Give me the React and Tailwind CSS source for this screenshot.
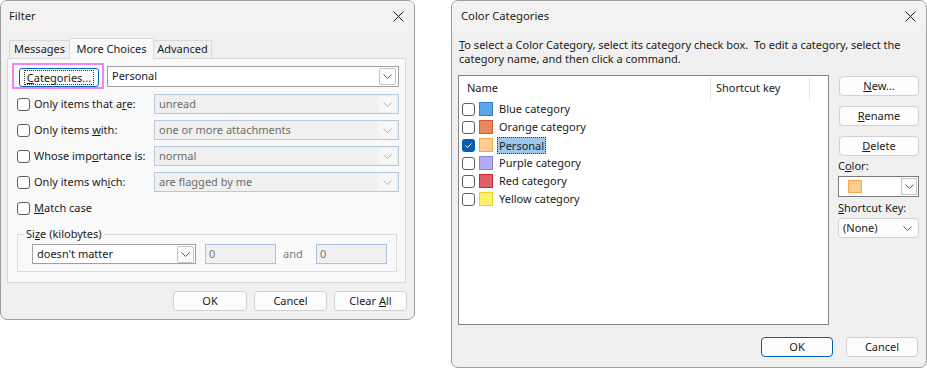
import React from "react";

const font = "font-['Segoe_UI','Noto_Sans',sans-serif]";

function CloseIcon() {
  return (
    <svg width="11" height="11" viewBox="0 0 11 11">
      <path d="M0.5 0.5L10.5 10.5M10.5 0.5L0.5 10.5" stroke="#1a1a1a" strokeWidth="1" fill="none" />
    </svg>
  );
}

function Chevron({ color = "#5a5a5a" }) {
  return (
    <svg width="9" height="5" viewBox="0 0 9 5">
      <path d="M0.5 0.5L4.5 4.5L8.5 0.5" stroke={color} strokeWidth="1" fill="none" />
    </svg>
  );
}

function Checkbox({ checked }) {
  if (checked) {
    return (
      <span className="w-[13px] h-[13px] rounded-[3px] bg-[#005fb8] flex items-center justify-center shrink-0">
        <svg width="9" height="7" viewBox="0 0 9 7">
          <path d="M1.5 3.5L3.5 5.5L7.5 1.5" stroke="white" strokeWidth="1" fill="none" />
        </svg>
      </span>
    );
  }
  return <span className="w-[13px] h-[13px] rounded-[3px] border border-[#5f5f5f] bg-white shrink-0" />;
}

function Btn({ children, className = "", primary }) {
  return (
    <div
      className={
        "h-[20px] flex items-center justify-center rounded-[4px] border bg-[#fdfdfd] " +
        (primary ? "border-[#005fb8] " : "border-[#d0d0d0] ") +
        className
      }
    >
      <span>{children}</span>
    </div>
  );
}

function DisabledCombo({ text }) {
  return (
    <div className="w-[245px] h-[20px] border border-[#b9c9dc] bg-[#f0f0f0] flex items-center justify-between pl-[4px] pr-[2px] text-[#6d6d6d]">
      <span>{text}</span>
      <span className="w-[17px] h-[16px] bg-[#f7f7f7] flex items-center justify-center">
        <Chevron color="#b5b5b5" />
      </span>
    </div>
  );
}

function DropBtn() {
  return (
    <span className="w-[17px] h-[17px] rounded-[2px] border border-[#c4c4c4] bg-[#fdfdfd] flex items-center justify-center">
      <Chevron />
    </span>
  );
}

function FilterDialog() {
  const rows = [
    [<>Only items that a<u>r</u>e:</>, "unread"],
    [<>Only items <u>w</u>ith:</>, "one or more attachments"],
    [<>Whose imp<u>o</u>rtance is:</>, "normal"],
    [<>Only items wh<u>i</u>ch:</>, "are flagged by me"],
  ];
  return (
    <div className="w-[415px] flex flex-col rounded-[7px] border border-[#9c9c9c] bg-[#f0f0f0] overflow-hidden">
      <div className="h-[30px] flex items-center justify-between pl-[8px] pr-[10px] bg-[#f3f2f0]">
        <span className="text-[11.25px]">Filter</span>
        <CloseIcon />
      </div>
      <div className="pt-[7px] pl-[6px]">
        <div className="h-[20px] flex items-end pl-[2px]">
          <div className="w-[61px] h-[18px] border border-b-0 border-[#d9d9d9] bg-[#f0f0f0] flex items-center justify-center">
            Messages
          </div>
          <div className="relative z-10 -ml-px w-[85px] h-[21px] -mb-px border border-b-0 border-[#d9d9d9] bg-[#f9f9f9] flex items-start pt-[2px] justify-center">
            More Choices
          </div>
          <div className="-ml-px w-[59px] h-[18px] border border-b-0 border-[#d9d9d9] bg-[#f0f0f0] flex items-center justify-center">
            Advanced
          </div>
        </div>
        <div className="w-[399px] h-[225px] border border-[#d9d9d9] bg-[#f9f9f9] pl-[4px] pt-[4px]">
          <div className="flex items-center h-[26px]">
            <div className="w-[92px] h-[26px] border-2 border-[#f383f1] pl-[5px] pt-[3px]">
              <div className="w-[80px] h-[19px] rounded-[3px] border border-[#0067c0] bg-[#fdfdfd] flex items-center justify-center">
                <span className="border border-dotted border-[#333] px-[2px] leading-[13px]">
                  <u>C</u>ategories...
                </span>
              </div>
            </div>
            <div className="ml-[3px] w-[292px] h-[21px] border border-[#a0a0a0] bg-white flex items-center justify-between pl-[4px] pr-[2px]">
              <span>Personal</span>
              <DropBtn />
            </div>
          </div>
          <div className="mt-[2px] pl-[5px]">
            {rows.map(([label, value], i) => (
              <div key={i} className="h-[26px] flex items-center">
                <div className="w-[137px] flex items-center gap-[4px]">
                  <Checkbox />
                  <span>{label}</span>
                </div>
                <DisabledCombo text={value} />
              </div>
            ))}
            <div className="h-[26px] flex items-center gap-[4px]">
              <Checkbox />
              <span>
                <u>M</u>atch case
              </span>
            </div>
          </div>
          <fieldset className="mt-[5px] ml-[5px] w-[380px] border border-[#dcdcdc] pl-[6px] pt-[2px] pb-[7px]">
            <legend className="px-[2px] leading-[16px]">
              Si<u>z</u>e (kilobytes)
            </legend>
            <div className="ml-[8px] flex items-center">
              <div className="w-[164px] h-[20px] border border-[#a0a0a0] bg-white flex items-center justify-between pl-[4px] pr-[1px]">
                <span>doesn't matter</span>
                <DropBtn />
              </div>
              <div className="ml-[9px] w-[71px] h-[20px] border border-[#a9c1de] bg-[#f0f0f0] pl-[3px] flex items-center text-[#7a7a7a]">
                0
              </div>
              <span className="ml-[7px] w-[33px] text-[#7a7a7a]">and</span>
              <div className="w-[71px] h-[20px] border border-[#a9c1de] bg-[#f0f0f0] pl-[3px] flex items-center text-[#7a7a7a]">
                0
              </div>
            </div>
          </fieldset>
        </div>
      </div>
      <div className="flex justify-end gap-[7px] pr-[7px] pt-[8px] pb-[8px]">
        <Btn className="w-[74px]">OK</Btn>
        <Btn className="w-[73px]">Cancel</Btn>
        <Btn className="w-[73px]">
          Clear <u>A</u>ll
        </Btn>
      </div>
    </div>
  );
}

const categories = [
  { name: "Blue category", fill: "#5aa8e8", edge: "#2c83d6" },
  { name: "Orange category", fill: "#e9875f", edge: "#d3582a" },
  { name: "Personal", fill: "#ffcb8f", edge: "#f5a54a", checked: true },
  { name: "Purple category", fill: "#b4acf0", edge: "#8b7fe0" },
  { name: "Red category", fill: "#e0606a", edge: "#c92a36" },
  { name: "Yellow category", fill: "#fff26a", edge: "#f3d02b" },
];

function ColorDialog() {
  return (
    <div className="w-[476px] h-[368px] flex flex-col rounded-[7px] border border-[#9c9c9c] bg-[#f0f0f0] overflow-hidden">
      <div className="h-[30px] shrink-0 flex items-center justify-between pl-[9px] pr-[10px] bg-[#f3f2f0]">
        <span className="text-[11.25px]">Color Categories</span>
        <CloseIcon />
      </div>
      <div className="pl-[6px] pr-[7px] pt-[7px]">
        <p className="pl-px leading-[14px] whitespace-pre">
          <u>T</u>o select a Color Category, select its category check box.  To edit a category, select the
          <br />
          category name, and then click a command.
        </p>
        <div className="mt-[9px] flex items-start">
          <div className="w-[371px] h-[250px] border border-[#838383] bg-white">
            <div className="h-[24px] flex items-stretch">
              <div className="w-[251px] pl-[8px] flex items-center">Name</div>
              <div className="w-px mt-[2px] bg-[#e5e5e5]" />
              <div className="w-[98px] pl-[5px] flex items-center">Shortcut key</div>
              <div className="w-px mt-[2px] bg-[#e5e5e5]" />
            </div>
            {categories.map((c) => (
              <div key={c.name} className="h-[18px] flex items-center pl-[3px]">
                <Checkbox checked={c.checked} />
                <span
                  className="ml-[4px] w-[14px] h-[14px] border shrink-0"
                  style={{ backgroundColor: c.fill, borderColor: c.edge }}
                />
                {c.checked ? (
                  <span className="ml-[4px] px-px border border-dotted border-[#333] bg-[#99c9ef] leading-[15px]">
                    {c.name}
                  </span>
                ) : (
                  <span className="ml-[6px]">{c.name}</span>
                )}
              </div>
            ))}
          </div>
          <div className="ml-[9px] w-[81px] pt-px flex flex-col">
            <Btn className="w-[80px] ml-px">
              <u>N</u>ew...
            </Btn>
            <Btn className="w-[80px] ml-px mt-[10px]">
              <u>R</u>ename
            </Btn>
            <Btn className="w-[80px] ml-px mt-[10px]">
              <u>D</u>elete
            </Btn>
            <span className="mt-[3px] leading-[14px]">
              C<u>o</u>lor:
            </span>
            <div className="mt-[3px] h-[21px] border border-[#7a7a7a] bg-white flex items-center justify-between pl-[9px] pr-px">
              <span className="w-[14px] h-[13px] bg-[#ffcb8f] border border-[#f5a54a]" />
              <span className="w-[16px] h-[17px] border border-[#c4c4c4] bg-[#fdfdfd] flex items-center justify-center">
                <Chevron />
              </span>
            </div>
            <span className="mt-[4px] leading-[14px]">
              <u>S</u>hortcut Key:
            </span>
            <div className="mt-[3px] h-[20px] rounded-[4px] border border-[#d0d0d0] bg-[#fdfdfd] flex items-center justify-between pl-[4px] pr-[6px]">
              <span>(None)</span>
              <Chevron />
            </div>
          </div>
        </div>
        <div className="mt-[12px] flex justify-end gap-[13px] pr-px">
          <Btn primary className="w-[72px]">OK</Btn>
          <Btn className="w-[72px]">Cancel</Btn>
        </div>
      </div>
    </div>
  );
}

export default function App() {
  return (
    <div className={"w-[927px] h-[368px] bg-white flex items-start gap-[36px] text-[11px] text-[#1b1b1b] " + font}>
      <FilterDialog />
      <ColorDialog />
    </div>
  );
}
